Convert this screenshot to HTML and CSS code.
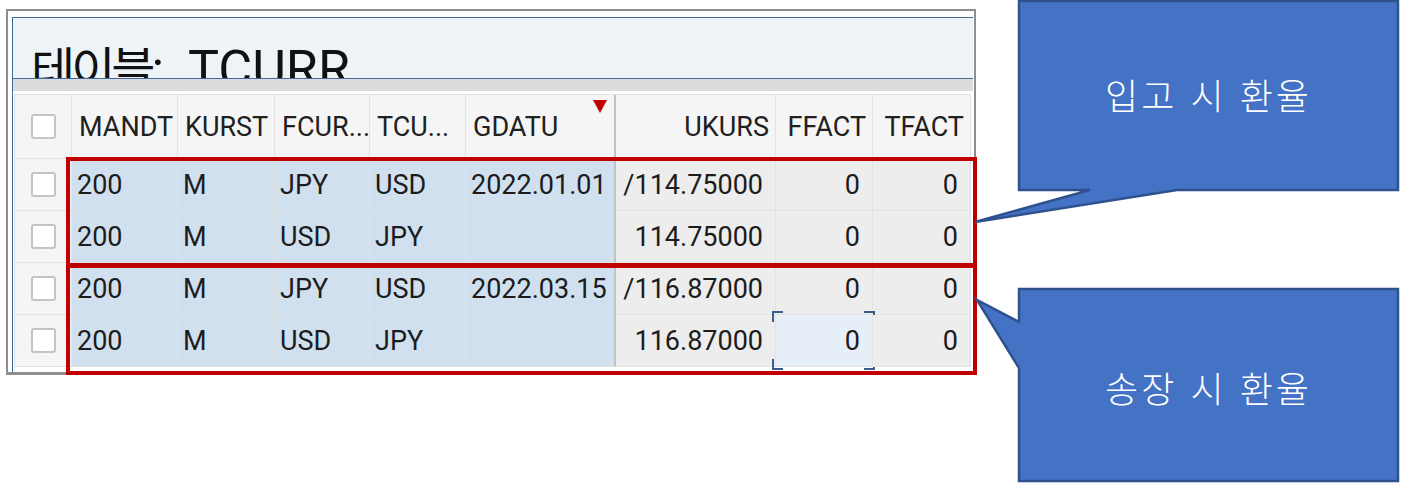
FILE: index.html
```html
<!DOCTYPE html>
<html lang="ko">
<head>
<meta charset="utf-8">
<title>TCURR</title>
<link rel="stylesheet" href="styles.css">
</head>
<body>
<div class="page">
  <div class="frame">
    <div class="panel">
      <div class="titlebar">
        <h1 class="title"><span class="title-ko">테이블</span><span class="title-lat">: TCURR</span></h1>
      </div>
      <div class="strip"></div>
      <div class="tablewrap">
        <div class="grid">
          <div class="c hd cb"><span class="check"></span></div>
          <div class="c hd">MANDT</div>
          <div class="c hd">KURST</div>
          <div class="c hd">FCUR...</div>
          <div class="c hd">TCU...</div>
          <div class="c hd date sorted">GDATU<span class="sort-mark"></span></div>
          <div class="c hd num">UKURS</div>
          <div class="c hd num">FFACT</div>
          <div class="c hd num">TFACT</div>

          <div class="c cb"><span class="check"></span></div>
          <div class="c sel">200</div>
          <div class="c sel">M</div>
          <div class="c sel">JPY</div>
          <div class="c sel">USD</div>
          <div class="c sel date merged">2022.01.01</div>
          <div class="c plain num">/114.75000</div>
          <div class="c plain num">0</div>
          <div class="c plain num">0</div>

          <div class="c cb"><span class="check"></span></div>
          <div class="c sel">200</div>
          <div class="c sel">M</div>
          <div class="c sel">USD</div>
          <div class="c sel">JPY</div>
          <div class="c plain num">114.75000</div>
          <div class="c plain num">0</div>
          <div class="c plain num">0</div>

          <div class="c cb"><span class="check"></span></div>
          <div class="c sel">200</div>
          <div class="c sel">M</div>
          <div class="c sel">JPY</div>
          <div class="c sel">USD</div>
          <div class="c sel date merged">2022.03.15</div>
          <div class="c plain num">/116.87000</div>
          <div class="c plain num">0</div>
          <div class="c plain num">0</div>

          <div class="c cb"><span class="check"></span></div>
          <div class="c sel">200</div>
          <div class="c sel">M</div>
          <div class="c sel">USD</div>
          <div class="c sel">JPY</div>
          <div class="c plain num">116.87000</div>
          <div class="c focus num">0<span class="corner tl"></span><span class="corner tr"></span><span class="corner bl"></span><span class="corner br"></span></div>
          <div class="c plain num">0</div>
        </div>
      </div>
    </div>
  </div>

  <div class="mark mark-one"></div>
  <div class="mark mark-two"></div>

  <div class="callout callout-one">
    <svg class="bubble" width="379" height="189" viewBox="0 0 379 189" aria-hidden="true">
      <polygon points="0,0 379,0 379,189 158,189 -44,221 71,189 0,189"/>
    </svg>
    <span class="callout-text">입고 시 환율</span>
  </div>

  <div class="callout callout-two">
    <svg class="bubble" width="379" height="192" viewBox="0 0 379 192" aria-hidden="true">
      <polygon points="0,0 379,0 379,192 0,192 0,79 -42,11 0,33"/>
    </svg>
    <span class="callout-text">송장 시 환율</span>
  </div>
</div>
</body>
</html>
```

FILE: styles.css
```css
* {
  box-sizing: border-box;
}

html, body {
  margin: 0;
  padding: 0;
  background: #ffffff;
}

.page {
  position: relative;
  width: 1404px;
  height: 485px;
  overflow: hidden;
  font-family: Roboto, "Noto Sans CJK KR", sans-serif;
  color: #1c1c1c;
}

/* ---------- window frame ---------- */
.frame {
  margin: 9px 0 0 6px;
  width: 970px;
  height: 366px;
  border: 2px solid #8e8e8e;
  border-bottom-width: 3px;
  padding: 6px 1px 0 4px;
  background: #ffffff;
}

.panel {
  height: 100%;
  border-left: 1px solid #3d6a9b;
  border-top: 1px solid #3d6a9b;
  display: flex;
  flex-direction: column;
}

.titlebar {
  height: 61px;
  flex: none;
  background: #eef3f8;
  border-bottom: 1px solid #3d6a9b;
  overflow: hidden;
  padding-left: 18px;
}

.title {
  margin: 22px 0 0 0;
  font-family: Roboto, sans-serif;
  font-size: 52px;
  font-weight: 400;
  line-height: 52px;
  white-space: nowrap;
  color: #111111;
}

.title-ko {
  font-family: "Noto Sans CJK KR", sans-serif;
  font-size: 48px;
  letter-spacing: -4px;
}

.title-lat {
  font-family: Roboto, sans-serif;
  font-size: 52px;
  word-spacing: 11px;
}

.strip {
  height: 12px;
  flex: none;
  background: #dcdcdc;
}

.tablewrap {
  flex: 1;
  padding: 3px 0 0 1px;
  background: #ffffff;
}

/* ---------- grid table ---------- */
.grid {
  display: grid;
  grid-template-columns: 57px 106px 97px 95px 96px 150px 160px 97px 98px;
  grid-template-rows: 64px 52px 52px 52px 52px;
  border-left: 1px solid #e2e2e2;
  border-top: 1px solid #e2e2e2;
  width: 957px;
  font-size: 27px;
}

.c {
  position: relative;
  display: flex;
  align-items: center;
  padding: 0 5px;
  border-right: 1px solid #e2e2e2;
  border-bottom: 1px solid #e2e2e2;
  white-space: nowrap;
  overflow: visible;
}

.hd {
  background: #f5f5f5;
  padding: 0 6px 0 7px;
  color: #202020;
}

.cb {
  background: #f5f5f5;
  justify-content: center;
  padding: 0;
}

.check {
  width: 25px;
  height: 25px;
  background: #ffffff;
  border: 2px solid #c4c4c4;
  border-radius: 3px;
}

.sel {
  background: #d1e0ef;
}

.plain {
  background: #ededed;
}

.num {
  justify-content: flex-end;
  padding-right: 12px;
}

.hd.num {
  padding-right: 6px;
}

.date {
  border-right: 2px solid #c3c3c3;
}

.merged {
  grid-row: span 2;
  align-items: flex-start;
  line-height: 52px;
}

.sort-mark {
  position: absolute;
  top: 5px;
  right: 7px;
  width: 0;
  height: 0;
  border-left: 7px solid transparent;
  border-right: 7px solid transparent;
  border-top: 13px solid #c00000;
}

.focus {
  background: #e6eef7;
}

.corner {
  position: absolute;
  width: 11px;
  height: 11px;
  border: 0 solid #3a5e8c;
}

.corner.tl { left: -4px; top: -4px; border-left-width: 2px; border-top-width: 2px; }
.corner.tr { right: -3px; top: -4px; border-right-width: 2px; border-top-width: 2px; }
.corner.bl { left: -4px; bottom: -4px; border-left-width: 2px; border-bottom-width: 2px; }
.corner.br { right: -3px; bottom: -4px; border-right-width: 2px; border-bottom-width: 2px; }

/* ---------- annotation overlays ---------- */
.mark {
  position: absolute;
  left: 66px;
  width: 911px;
  border: 4px solid #c00000;
}

.mark-one {
  top: 157px;
  height: 111px;
}

.mark-two {
  top: 263px;
  height: 112px;
}

.callout {
  position: absolute;
  left: 1019px;
  width: 379px;
  display: flex;
  align-items: center;
  justify-content: center;
}

.callout-one {
  top: 1px;
  height: 189px;
  padding-bottom: 3px;
}

.callout-two {
  top: 289px;
  height: 192px;
  padding-top: 3px;
}

.bubble {
  position: absolute;
  left: 0;
  top: 0;
  overflow: visible;
}

.bubble polygon {
  fill: #4472c4;
  stroke: #2f528f;
  stroke-width: 2.5;
  stroke-linejoin: miter;
}

.callout-text {
  position: relative;
  font-family: "Noto Sans CJK KR", sans-serif;
  font-size: 36px;
  font-weight: 300;
  letter-spacing: 3px;
  color: #ffffff;
}
```
